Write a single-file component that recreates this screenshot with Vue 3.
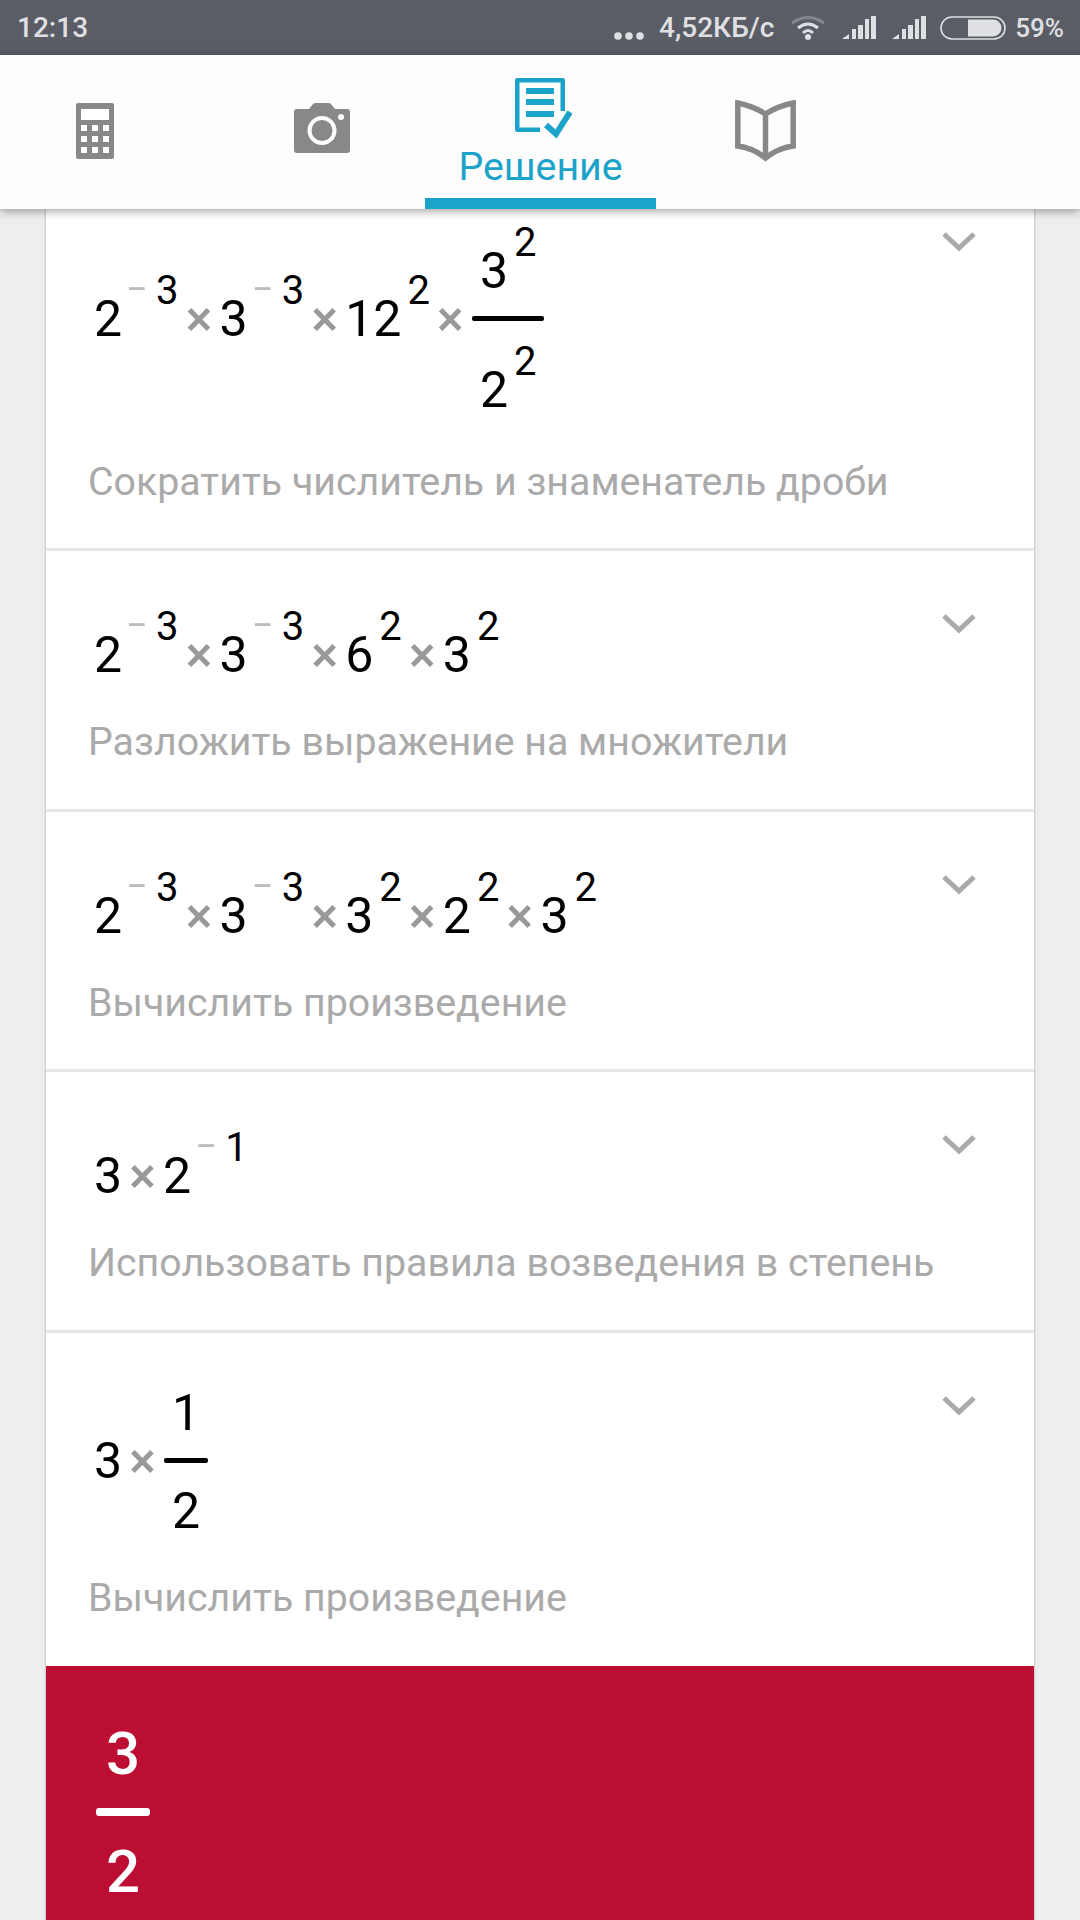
<script setup>
const n = v => ({ t: 'n', v })
const s = (v, neg) => ({ t: 's', v, neg })
const x = { t: 'x' }
const f = (a, b) => ({ t: 'f', a, b })
const rows = [
  { cls: 'r1', math: [n('2'), s('3', 1), x, n('3'), s('3', 1), x, n('12'), s('2'), x, f([n('3'), s('2')], [n('2'), s('2')])], text: 'Сократить числитель и знаменатель дроби' },
  { cls: 'r2', math: [n('2'), s('3', 1), x, n('3'), s('3', 1), x, n('6'), s('2'), x, n('3'), s('2')], text: 'Разложить выражение на множители' },
  { cls: 'r2', math: [n('2'), s('3', 1), x, n('3'), s('3', 1), x, n('3'), s('2'), x, n('2'), s('2'), x, n('3'), s('2')], text: 'Вычислить произведение' },
  { cls: 'r2', math: [n('3'), x, n('2'), s('1', 1)], text: 'Использовать правила возведения в степень' },
  { cls: 'r5', math: [n('3'), x, f([n('1')], [n('2')])], text: 'Вычислить произведение' }
]
</script>

<template>
  <div class="screen">
    <div class="status">
      <span class="time">12:13</span>
      <div class="status-right">
        <svg class="dots" width="30" height="8" viewBox="0 0 30 8">
          <circle cx="4" cy="4" r="3.8" fill="#dfe0e3"/><circle cx="15" cy="4" r="3.8" fill="#dfe0e3"/><circle cx="26" cy="4" r="3.8" fill="#dfe0e3"/>
        </svg>
        <span class="speed">4,52КБ/с</span>
        <svg class="wifi" width="34" height="25" viewBox="0 0 34 25">
          <path d="M1 8 Q17 -3 33 8" fill="none" stroke="#85878d" stroke-width="3"/>
          <path d="M7 13 Q17 5 27 13" fill="none" stroke="#dfe0e3" stroke-width="3"/>
          <path d="M12 18 Q17 13 22 18" fill="none" stroke="#dfe0e3" stroke-width="3"/>
          <circle cx="17" cy="22" r="3" fill="#dfe0e3"/>
        </svg>
        <svg v-for="i in 2" :key="i" class="sig" width="34" height="23" viewBox="0 0 34 23">
          <path d="M0 23 L7 18 V23Z M10 13 h4 v10 h-4Z M16 9 h5 v14 h-5Z M23 3 h4 v20 h-4Z M29 0 h5 v23 h-5Z" fill="#dfe0e3"/>
        </svg>
        <svg class="batt" width="66" height="24" viewBox="0 0 66 24">
          <rect x="1" y="1" width="64" height="22" rx="11" fill="none" stroke="#dfe0e3" stroke-width="1.6"/>
          <path d="M28 3.5 H53 a8.5 8.5 0 0 1 0 17 H28Z" fill="#dfe0e3"/>
        </svg>
        <span class="pct">59%</span>
      </div>
    </div>

    <header class="tabs">
      <div class="tab t1">
        <svg width="38" height="56" viewBox="0 0 38 56">
          <rect width="38" height="56" rx="2" fill="#888"/>
          <rect x="5" y="6" width="28" height="11" fill="#fff"/>
          <g fill="#fff">
            <rect x="5" y="22" width="6" height="6"/><rect x="16" y="22" width="6" height="6"/><rect x="27" y="22" width="6" height="6"/>
            <rect x="5" y="33" width="6" height="6"/><rect x="16" y="33" width="6" height="6"/><rect x="27" y="33" width="6" height="6"/>
            <rect x="5" y="44" width="6" height="6"/><rect x="16" y="44" width="6" height="6"/><rect x="27" y="44" width="6" height="6"/>
          </g>
        </svg>
      </div>
      <div class="tab t2">
        <svg width="56" height="50" viewBox="0 0 56 50">
          <path d="M3 6 H15 L19 1 Q20 0 22 0 H34 Q36 0 37 1 L41 6 H53 Q56 6 56 9 V47 Q56 50 53 50 H3 Q0 50 0 47 V9 Q0 6 3 6Z" fill="#888"/>
          <circle cx="28" cy="27.5" r="12.5" fill="none" stroke="#fff" stroke-width="4"/>
          <circle cx="47" cy="14" r="3" fill="#fff"/>
        </svg>
      </div>
      <div class="tab t3">
        <svg width="57" height="62" viewBox="0 0 57 62">
          <path d="M47.75 33 V2.25 H2.25 V51.75 H25" fill="none" stroke="#1ba3c9" stroke-width="4.5" stroke-linejoin="round"/>
          <path d="M11 13 H39 M11 24 H39 M11 36 H39" stroke="#1ba3c9" stroke-width="6"/>
          <path d="M31 47 L41 56 L55 34" fill="none" stroke="#1ba3c9" stroke-width="6"/>
        </svg>
        <span class="label">Решение</span>
      </div>
      <div class="tab t4">
        <svg width="61" height="62" viewBox="0 0 61 62">
          <path d="M30.5 14 Q18 6 2.8 3 V46 Q18 48 30.5 58 Q43 48 58.2 46 V3 Q43 6 30.5 14 V58" fill="none" stroke="#888" stroke-width="5.5"/>
        </svg>
      </div>
    </header>

    <main class="page">
      <section class="card">
        <article v-for="(r, i) in rows" :key="i" class="row" :class="r.cls">
          <svg class="chev" width="34" height="22" viewBox="0 0 34 22">
            <path d="M2 3 L17 17 L32 3" fill="none" stroke="#aaa" stroke-width="5"/>
          </svg>
          <div class="math">
            <template v-for="(k, j) in r.math" :key="j">
              <span v-if="k.t === 'n'" class="num">{{ k.v }}</span>
              <span v-else-if="k.t === 's'" class="sup" :class="{ neg: k.neg }"><span v-if="k.neg" class="minus">−</span>{{ k.v }}</span>
              <span v-else-if="k.t === 'x'" class="times">×</span>
              <span v-else class="frac">
                <span class="fnum"><template v-for="(q, m) in k.a" :key="m"><span v-if="q.t === 'n'" class="num">{{ q.v }}</span><span v-else class="sup">{{ q.v }}</span></template></span>
                <span class="bar"></span>
                <span class="fden"><template v-for="(q, m) in k.b" :key="m"><span v-if="q.t === 'n'" class="num">{{ q.v }}</span><span v-else class="sup">{{ q.v }}</span></template></span>
              </span>
            </template>
          </div>
          <p class="cap">{{ r.text }}</p>
        </article>
        <div class="answer">
          <div class="afrac">
            <span>3</span>
            <i class="abar"></i>
            <span>2</span>
          </div>
        </div>
      </section>
    </main>
  </div>
</template>

<style scoped>
.screen { width: 1080px; height: 1920px; overflow: hidden; display: flex; flex-direction: column; background: #eeeeef; font-family: Roboto, sans-serif; }
.status { height: 55px; flex: none; background: #5a5d65; color: #dfe0e3; display: flex; align-items: center; justify-content: space-between; padding: 0 16px 0 17px; font-size: 28px; font-weight: 500; }
.status-right { display: flex; align-items: center; }
.dots { margin: 16px 15px 0 0; }
.speed { margin-right: 17px; }
.wifi { margin-right: 17px; }
.sig { margin-right: 16px; }
.sig + .sig { margin-right: 14px; }
.batt { margin: 0 9px 0 0; }
.pct { font-size: 26px; }
.tabs { height: 154px; flex: none; background: #fdfdfd; display: flex; position: relative; z-index: 2; box-shadow: 0 2px 9px rgba(0,0,0,.38); }
.tab { display: flex; flex-direction: column; align-items: center; position: relative; }
.t1 { width: 190px; padding-top: 48px; }
.t2 { width: 206px; margin-left: 29px; padding-top: 48px; }
.t3 { width: 231px; padding-top: 23px; border-bottom: 11px solid #1ba3c9; height: 154px; box-sizing: border-box; color: #1ba3c9; }
.t3 svg { margin-left: 6px; flex: none; }
.t4 { width: 218px; padding-top: 45px; }
.label { font-size: 39.3px; line-height: 40px; margin-top: 7px; }
.page { flex: 1; min-height: 0; padding: 0 46px; margin-top: -40px; }
.card { background: #fff; box-shadow: -1.5px 0 0 #d4d4d4, 1.5px 0 0 #d4d4d4; }
.row { position: relative; box-sizing: border-box; border-bottom: 3px solid #e6e6e6; display: flex; flex-direction: column; padding-left: 42px; }
.r1 { height: 382px; padding-top: 72px; }
.r2 { height: 260.67px; padding-top: 74px; }
.r5 { height: 333px; padding-top: 50px; border-bottom: 0; }
.chev { position: absolute; right: 58px; top: 62px; }
.math { line-height: 60px; white-space: nowrap; color: #000; font-size: 50px; padding-left: 6px; }
.num { font-size: 50px; }
.sup { font-size: 40px; line-height: 0; vertical-align: 32px; margin-left: 6px; }
.sup.neg { margin-left: 0; }
.minus { display: inline-block; width: 34px; padding-left: 4px; box-sizing: border-box; text-align: left; color: #bbb; font-size: 38px; vertical-align: 2px; }
.times { display: inline-block; width: 41px; text-align: center; color: #999; font-size: 50px; font-weight: 500; line-height: 0; }
.frac { display: inline-flex; flex-direction: column; align-items: center; vertical-align: 48px; margin-left: 1px; line-height: 60px; padding: 0; }
.fnum { padding: 0 8px 15px; }
.fden { padding: 18px 8px 0; }
.r1 .fden { padding-top: 39px; }
.bar { align-self: stretch; height: 5px; background: #000; border-radius: 2px; }
.cap { margin: auto 0 0; padding-bottom: 46.5px; font-size: 39.3px; line-height: 40px; color: #aaa; white-space: nowrap; }
.r5 .cap { padding-bottom: 47.5px; }
.answer { height: 260px; background: #bb0e32; padding: 58px 0 0 50px; box-sizing: border-box; }
.afrac { width: 54px; display: flex; flex-direction: column; align-items: center; color: #fff; font-size: 60px; font-weight: 500; line-height: 60px; }
.abar { width: 54px; height: 8px; background: #fff; border-radius: 3px; margin: 24.5px 0 26px; flex: none; }
</style>
